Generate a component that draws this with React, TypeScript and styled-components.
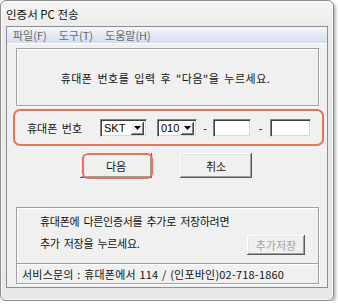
import styled, { createGlobalStyle } from 'styled-components';

const GlobalStyle = createGlobalStyle`
  html, body {
    margin: 0;
    padding: 0;
    background: #fff;
  }
  * { box-sizing: border-box; }
  body {
    font-family: "Noto Sans CJK KR", "Liberation Sans", sans-serif;
    font-size: 11px;
    color: #141414;
  }
`;

const Window = styled.div`
  width: 334px;
  height: 301px;
  border: 1px solid #8c8c8c;
  border-radius: 6px;
  background: linear-gradient(180deg, #f5f5f5 0, #ebebeb 30px, #e7e7e7 100%);
  box-shadow: inset 0 0 0 1px #fbfbfb, 2px 2px 3px rgba(0, 0, 0, 0.28);
  display: flex;
  flex-direction: column;
`;

const TitleBar = styled.div`
  height: 25px;
  padding: 1px 0 0 5px;
  display: flex;
  align-items: center;
  font-size: 11.5px;
  color: #111;
`;

const Client = styled.div`
  margin: 0 5px;
  height: 262px;
  border: 1px solid #8d8d8d;
  background: #f0f0f0;
  display: flex;
  flex-direction: column;
`;

const MenuBar = styled.div`
  height: 17px;
  padding-left: 6px;
  display: flex;
  align-items: center;
  gap: 12px;
  background: linear-gradient(180deg, #f6f8fc 0%, #e3e9f5 50%, #d4ddef 100%);
  border-bottom: 1px solid #fff;
  color: #6a6a6a;
  font-size: 11px;
`;

const MenuItem = styled.span`
  line-height: 1;
`;

const Body = styled.div`
  display: flex;
  flex-direction: column;
  padding-top: 4px;
`;

const Etched = styled.div`
  margin-left: 9px;
  width: 303px;
  border: 1px solid #a0a0a0;
  box-shadow: 1px 1px 0 #fff, inset 1px 1px 0 #fff;
`;

const GuidePanel = styled(Etched)`
  height: 58px;
  display: flex;
  align-items: center;
  justify-content: center;
  padding: 2px 4px 0 0;
  letter-spacing: 0.5px;
  word-spacing: 2px;
`;

const PhoneBox = styled.div`
  margin: 3px 0 0 6px;
  width: 311px;
  height: 37px;
  border: 2px solid #e8735a;
  border-radius: 7px;
  display: flex;
  align-items: center;
  padding: 1px 0 0 12px;
`;

const FieldLabel = styled.span`
  width: 73px;
  word-spacing: 2px;
`;

const Sunken = styled.div<{ $width: number }>`
  width: ${p => p.$width}px;
  height: 18px;
  background: #fff;
  border: 1px solid;
  border-color: #828282 #f4f4f4 #f4f4f4 #828282;
  box-shadow: inset 1px 1px 0 #404040, inset -1px -1px 0 #d8d8d8;
`;

const Combo = styled(Sunken)`
  display: flex;
  align-items: center;
  justify-content: space-between;
  padding: 0 2px 0 3px;
  font-family: "Liberation Sans", sans-serif;
  font-size: 11px;
  color: #000;
`;

const ComboArrow = styled.span`
  width: 13px;
  height: 13px;
  background: #f0f0f0;
  box-shadow: inset -1px -1px 0 #404040, inset 1px 1px 0 #fff, inset -2px -2px 0 #8a8a8a;
  display: flex;
  align-items: center;
  justify-content: center;
`;

const Dash = styled.span<{ $width: number }>`
  width: ${p => p.$width}px;
  text-align: center;
  font-family: "Liberation Sans", sans-serif;
`;

const Gap = styled.span<{ $width: number }>`
  width: ${p => p.$width}px;
`;

const ButtonRow = styled.div`
  margin-top: 7px;
  height: 25px;
  display: flex;
  justify-content: center;
  gap: 28px;
  padding-right: 2px;
`;

const WinButton = styled.button<{ $width: number; $height: number; $highlight?: boolean }>`
  position: relative;
  width: ${p => p.$width}px;
  height: ${p => p.$height}px;
  padding: 0;
  border: none;
  background: #f0f0f0;
  box-shadow: inset -1px -1px 0 #5c5c5c, inset 1px 1px 0 #fff, inset -2px -2px 0 #a0a0a0, inset 2px 2px 0 #e6e6e6;
  font-family: "Noto Sans CJK KR", sans-serif;
  font-size: 11px;
  color: ${p => (p.disabled ? '#a3a3a3' : '#141414')};
  &::after {
    content: '';
    display: ${p => (p.$highlight ? 'block' : 'none')};
    position: absolute;
    inset: 0 -1px -1px 2px;
    border: 2px solid #e8735a;
    border-radius: 6px;
  }
`;

const AddPanel = styled(Etched)`
  margin-top: 29px;
  height: 77px;
  display: flex;
  flex-direction: column;
`;

const AddContent = styled.div`
  flex: 1;
  padding: 5px 13px 0 23px;
  display: flex;
  flex-direction: column;
`;

const Line = styled.div`
  height: 16px;
  display: flex;
  align-items: center;
  letter-spacing: -0.3px;
  word-spacing: 2px;
`;

const AddRow = styled.div`
  margin-top: 6px;
  display: flex;
  justify-content: space-between;
  align-items: flex-start;
`;

const StatusBar = styled.div`
  height: 20px;
  border-top: 1px solid #a0a0a0;
  box-shadow: inset 0 1px 0 #fff;
  padding: 1px 0 0 5px;
  display: flex;
  align-items: center;
  letter-spacing: 0.2px;
  word-spacing: 1px;
`;

function ComboBox({ value, width }: { value: string; width: number }) {
  return (
    <Combo $width={width}>
      <span>{value}</span>
      <ComboArrow>
        <svg width="7" height="4" viewBox="0 0 7 4">
          <path d="M0 0h7L3.5 4z" fill="#000" />
        </svg>
      </ComboArrow>
    </Combo>
  );
}

export default function App() {
  return (
    <>
      <GlobalStyle />
      <Window>
        <TitleBar>인증서 PC 전송</TitleBar>
        <Client>
          <MenuBar>
            <MenuItem>파일(F)</MenuItem>
            <MenuItem>도구(T)</MenuItem>
            <MenuItem>도움말(H)</MenuItem>
          </MenuBar>
          <Body>
            <GuidePanel>휴대폰 번호를 입력 후 "다음"을 누르세요.</GuidePanel>
            <PhoneBox>
              <FieldLabel>휴대폰 번호</FieldLabel>
              <ComboBox value="SKT" width={47} />
              <Gap $width={10} />
              <ComboBox value="010" width={40} />
              <Dash $width={16}>-</Dash>
              <Sunken $width={38} />
              <Dash $width={19}>-</Dash>
              <Sunken $width={41} />
            </PhoneBox>
            <ButtonRow>
              <WinButton $width={72} $height={25} $highlight>다음</WinButton>
              <WinButton $width={72} $height={25}>취소</WinButton>
            </ButtonRow>
            <AddPanel>
              <AddContent>
                <Line>휴대폰에 다른인증서를 추가로 저장하려면</Line>
                <AddRow>
                  <Line>추가 저장을 누르세요.</Line>
                  <WinButton $width={58} $height={20} disabled>추가저장</WinButton>
                </AddRow>
              </AddContent>
              <StatusBar>서비스문의 : 휴대폰에서 114 / (인포바인)02-718-1860</StatusBar>
            </AddPanel>
          </Body>
        </Client>
      </Window>
    </>
  );
}
